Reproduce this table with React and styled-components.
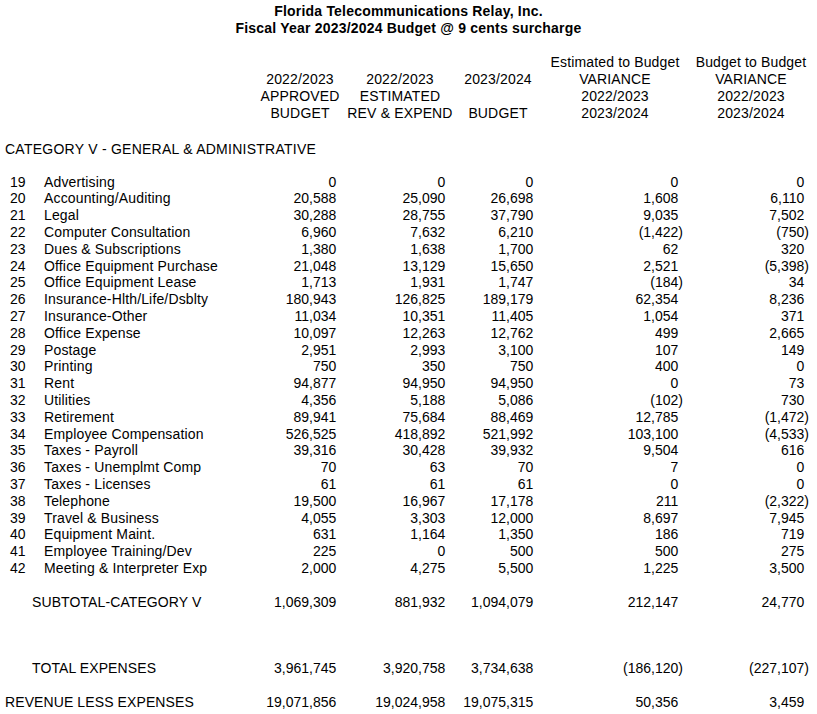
import styled, { createGlobalStyle } from 'styled-components'

const COLUMNS = '40px 215px 90px 110px 86px 148px 124px'
const PAD = [4, 5, 3, 6, 4]

const rows = [
    [19, 'Advertising', 0, 0, 0, 0, 0],
    [20, 'Accounting/Auditing', 20588, 25090, 26698, 1608, 6110],
    [21, 'Legal', 30288, 28755, 37790, 9035, 7502],
    [22, 'Computer Consultation', 6960, 7632, 6210, -1422, -750],
    [23, 'Dues & Subscriptions', 1380, 1638, 1700, 62, 320],
    [24, 'Office Equipment Purchase', 21048, 13129, 15650, 2521, -5398],
    [25, 'Office Equipment Lease', 1713, 1931, 1747, -184, 34],
    [26, 'Insurance-Hlth/Life/Dsblty', 180943, 126825, 189179, 62354, 8236],
    [27, 'Insurance-Other', 11034, 10351, 11405, 1054, 371],
    [28, 'Office Expense', 10097, 12263, 12762, 499, 2665],
    [29, 'Postage', 2951, 2993, 3100, 107, 149],
    [30, 'Printing', 750, 350, 750, 400, 0],
    [31, 'Rent', 94877, 94950, 94950, 0, 73],
    [32, 'Utilities', 4356, 5188, 5086, -102, 730],
    [33, 'Retirement', 89941, 75684, 88469, 12785, -1472],
    [34, 'Employee Compensation', 526525, 418892, 521992, 103100, -4533],
    [35, 'Taxes - Payroll', 39316, 30428, 39932, 9504, 616],
    [36, 'Taxes - Unemplmt Comp', 70, 63, 70, 7, 0],
    [37, 'Taxes - Licenses', 61, 61, 61, 0, 0],
    [38, 'Telephone', 19500, 16967, 17178, 211, -2322],
    [39, 'Travel & Business', 4055, 3303, 12000, 8697, 7945],
    [40, 'Equipment Maint.', 631, 1164, 1350, 186, 719],
    [41, 'Employee Training/Dev', 225, 0, 500, 500, 275],
    [42, 'Meeting & Interpreter Exp', 2000, 4275, 5500, 1225, 3500],
]

const headers = [
    ['', '2022/2023', 'APPROVED', 'BUDGET'],
    ['', '2022/2023', 'ESTIMATED', 'REV & EXPEND'],
    ['', '2023/2024', '', 'BUDGET'],
    ['Estimated to Budget', 'VARIANCE', '2022/2023', '2023/2024'],
    ['Budget to Budget', 'VARIANCE', '2022/2023', '2023/2024'],
]

const fmt = (n) => Math.abs(n).toLocaleString('en-US')

// accounting style: positives keep room for the closing paren
const Amount = ({ value, pad }) => (
    <AmountCell $pad={pad}>
        {value < 0 ? `(${fmt(value)})` : fmt(value)}
        {value >= 0 && <Paren>)</Paren>}
    </AmountCell>
)

const TotalRow = ({ label, indent, values, gap }) => (
    <SumRow $gap={gap}>
        <SumLabel $indent={indent}>{label}</SumLabel>
        {values.map((v, i) => (
            <Amount key={i} value={v} pad={PAD[i]} />
        ))}
    </SumRow>
)

const App = () => (
    <Sheet>
        <GlobalStyle />
        <Title>
            <div>Florida Telecommunications Relay, Inc.</div>
            <div>Fiscal Year 2023/2024 Budget @ 9 cents surcharge</div>
        </Title>
        <HeaderRow>
            <span />
            <span />
            {headers.map((lines, i) => (
                <HeadCell key={i}>
                    {lines.map((l, j) => (
                        <div key={j}>{l || '\u00a0'}</div>
                    ))}
                </HeadCell>
            ))}
        </HeaderRow>
        <Category>CATEGORY V - GENERAL &amp; ADMINISTRATIVE</Category>
        <Body>
            {rows.map(([num, label, ...values]) => (
                <Row key={num}>
                    <Num>{num}</Num>
                    <Label>{label}</Label>
                    {values.map((v, i) => (
                        <Amount key={i} value={v} pad={PAD[i]} />
                    ))}
                </Row>
            ))}
        </Body>
        <TotalRow
            label='SUBTOTAL-CATEGORY V'
            indent={32}
            gap={16.8}
            values={[1069309, 881932, 1094079, 212147, 24770]}
        />
        <TotalRow
            label='TOTAL EXPENSES'
            indent={32}
            gap={49.2}
            values={[3961745, 3920758, 3734638, -186120, -227107]}
        />
        <TotalRow
            label='REVENUE LESS EXPENSES'
            indent={5}
            gap={18.2}
            values={[19071856, 19024958, 19075315, 50356, 3459]}
        />
    </Sheet>
)

const GlobalStyle = createGlobalStyle`
    html, body {
        margin: 0;
        background: #ffffff;
    }
    body {
        font-family: "Liberation Sans", Arial, sans-serif;
        font-size: 14px;
        color: #000000;
    }
`

const Sheet = styled.div`
    width: 817px;
    height: 714px;
    overflow: hidden;
`

const Title = styled.div`
    padding-top: 3px;
    text-align: center;
    font-weight: bold;
    line-height: 17px;
    letter-spacing: 0.2px;
`

const HeaderRow = styled.div`
    display: grid;
    grid-template-columns: ${COLUMNS};
    margin-top: 16.5px;
    line-height: 17px;
`

const HeadCell = styled.div`
    text-align: center;
    white-space: nowrap;
    letter-spacing: 0.15px;
`

const Category = styled.div`
    margin-top: 19px;
    padding-left: 5px;
    line-height: 17px;
    letter-spacing: 0.25px;
`

const Body = styled.div`
    margin-top: 16.1px;
`

const Row = styled.div`
    display: grid;
    grid-template-columns: ${COLUMNS};
    line-height: 16.8px;
    white-space: nowrap;
`

const Num = styled.div`
    padding-left: 10px;
`

const Label = styled.div`
    padding-left: 4px;
    letter-spacing: 0.15px;
`

const AmountCell = styled.div`
    text-align: right;
    padding-right: ${(p) => p.$pad}px;
`

const Paren = styled.span`
    visibility: hidden;
`

const SumRow = styled(Row)`
    margin-top: ${(p) => p.$gap}px;
`

const SumLabel = styled.div`
    grid-column: 1 / 3;
    padding-left: ${(p) => p.$indent}px;
    letter-spacing: 0.1px;
`

export default App
